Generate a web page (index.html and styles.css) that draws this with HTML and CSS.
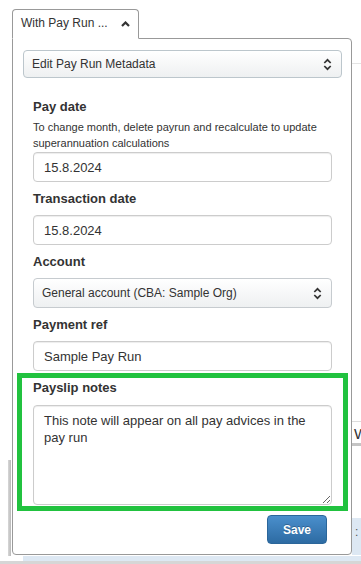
FILE: index.html
```html
<!DOCTYPE html>
<html>
<head>
	<title>Edit Pay Run Metadata</title>
	<link rel="stylesheet" href="styles.css">
</head>
<body>

<div class="page">
  <div class="side-left"><div class="side-left-edge"></div></div>

  <div class="popover">
    <div class="tabs">
      <div class="tab">
        <span>With Pay Run ...</span>
        <svg class="caret" width="9" height="6" viewBox="0 0 9 6"><path d="M1 5 L4.5 1.5 L8 5" fill="none" stroke="#333" stroke-width="2.2"/></svg>
      </div>
    </div>

    <div class="panel">
      <div class="select">
        <span>Edit Pay Run Metadata</span>
        <svg width="9" height="13" viewBox="0 0 9 13"><path d="M1.3 5 L4.5 1.8 L7.7 5 M1.3 8 L4.5 11.2 L7.7 8" fill="none" stroke="#333" stroke-width="1.7"/></svg>
      </div>

      <form class="meta-form" onsubmit="return false">
        <div class="field first">
          <label for="pay-date">Pay date</label>
          <div class="explanation">To change month, delete payrun and recalculate to update superannuation calculations</div>
          <input type="text" id="pay-date" value="15.8.2024">
        </div>

        <div class="field">
          <label for="transaction-date">Transaction date</label>
          <input type="text" id="transaction-date" value="15.8.2024">
        </div>

        <div class="field">
          <label>Account</label>
          <div class="select tall">
            <span>General account (CBA: Sample Org)</span>
            <svg width="9" height="13" viewBox="0 0 9 13"><path d="M1.3 5 L4.5 1.8 L7.7 5 M1.3 8 L4.5 11.2 L7.7 8" fill="none" stroke="#333" stroke-width="1.7"/></svg>
          </div>
        </div>

        <div class="field">
          <label for="payment-ref">Payment ref</label>
          <input type="text" id="payment-ref" value="Sample Pay Run">
        </div>

        <div class="field highlight">
          <label for="payslip-notes">Payslip notes</label>
          <textarea id="payslip-notes">This note will appear on all pay advices in the pay run</textarea>
        </div>

        <div class="buttons">
          <button type="submit">Save</button>
        </div>
      </form>
    </div>
  </div>

  <div class="side-right">
    <div class="side-rule"></div>
    <div class="side-tab">W</div>
    <div class="side-cell">:</div>
  </div>
</div>

<div class="page-strip"></div>
<div class="page-bar"></div>

</body>
</html>
```

FILE: styles.css
```css
body {
  margin: 0;
  font-family: "Liberation Sans", Arial, sans-serif;
  color: #333;
  background: #fff;
}

.page {
  display: flex;
}

.side-left {
  width: 12px;
  flex-shrink: 0;
}

.side-left-edge {
  width: 3px;
  height: 96px;
  margin: 460px 0 0 8px;
  background: linear-gradient(to right, #d8d8d8, #b9b9b9);
}

.popover {
  width: 340px;
  flex-shrink: 0;
  padding-top: 9px;
}

.side-right {
  flex: 1;
  overflow: hidden;
}

.side-rule {
  height: 1px;
  margin-top: 63px;
  background: #e4e4e4;
}

.side-tab {
  box-sizing: border-box;
  height: 25px;
  margin-top: 357px;
  padding: 4px 0 0 2px;
  font-size: 15px;
  line-height: 16px;
  color: #333;
  white-space: nowrap;
  border-top: solid 1px #ddd;
  border-bottom: solid 3px #c4c4c4;
}

.side-cell {
  height: 37px;
  margin-top: 72px;
  padding: 7px 0 0 3px;
  box-sizing: border-box;
  font-size: 12px;
  color: #555;
  background: #dde8f3;
}

.tabs {
  display: flex;
}

.tab {
  position: relative;
  z-index: 1;
  box-sizing: border-box;
  display: flex;
  align-items: center;
  justify-content: space-between;
  width: 127px;
  height: 30px;
  margin-bottom: -1px;
  padding: 0 8px 2px 8px;
  font-size: 12px;
  background: #fff;
  border: solid 1px #999;
  border-bottom-color: #fff;
  border-radius: 4px 4px 0 0;
}

.tab .caret {
  margin-top: 1px;
}

.panel {
  box-sizing: border-box;
  width: 340px;
  padding: 11px 9px 10px 10px;
  border: solid 1px #999;
  border-radius: 0 4px 4px 4px;
  background: #fff;
}

.select {
  box-sizing: border-box;
  display: flex;
  align-items: center;
  justify-content: space-between;
  height: 28px;
  padding: 0 9px 0 8px;
  font-size: 12px;
  color: #333;
  background: linear-gradient(#fff, #eef0f1);
  border: solid 1px #bcc6cc;
  border-radius: 4px;
}

.select.tall {
  height: 30px;
  border-color: #c6cbcf;
}

.meta-form {
  margin: 0;
  padding: 0 10px;
}

.field {
  margin-top: 8px;
}

.field.first {
  margin-top: 20px;
}

.field label {
  display: block;
  font-size: 13px;
  font-weight: bold;
  line-height: 18px;
  margin-bottom: 7px;
}

.field.first label {
  margin-bottom: 3px;
}

.explanation {
  font-size: 11px;
  line-height: 16px;
  margin-bottom: 1px;
}

.field input[type="text"] {
  display: block;
  box-sizing: border-box;
  width: 100%;
  height: 30px;
  margin: 0;
  padding: 0 10px;
  font-family: inherit;
  font-size: 13px;
  color: #333;
  border: solid 1px #ccc;
  border-radius: 4px;
  box-shadow: inset 0 1px 1px rgba(0, 0, 0, .075);
}

.field.highlight {
  margin: 2px -16px 0 -16px;
  padding: 1px 11px 1px 11px;
  border: solid 5px #21c23f;
}

.field.highlight label {
  margin-bottom: 8px;
}

.field textarea {
  display: block;
  box-sizing: border-box;
  width: 100%;
  height: 100px;
  margin: 0;
  padding: 6px 10px;
  font-family: inherit;
  font-size: 13px;
  line-height: 17px;
  color: #333;
  border: solid 1px #ccc;
  border-radius: 4px;
  box-shadow: inset 0 1px 1px rgba(0, 0, 0, .075);
  resize: vertical;
}

.buttons {
  display: flex;
  justify-content: flex-end;
  margin-top: 4px;
  padding-right: 5px;
}

.buttons button {
  width: 60px;
  height: 29px;
  font-family: inherit;
  font-size: 12px;
  font-weight: bold;
  color: #fff;
  text-shadow: 0 -1px 0 rgba(0, 0, 0, .25);
  background: linear-gradient(#4a8fcc, #2d6ba3);
  border: solid 1px #2b669a;
  border-radius: 4px;
  cursor: pointer;
}

.page-strip {
  height: 5px;
  margin-left: 23px;
  background: #dde8f3;
}

.page-bar {
  height: 4px;
  background: #d6d6d6;
}
```
